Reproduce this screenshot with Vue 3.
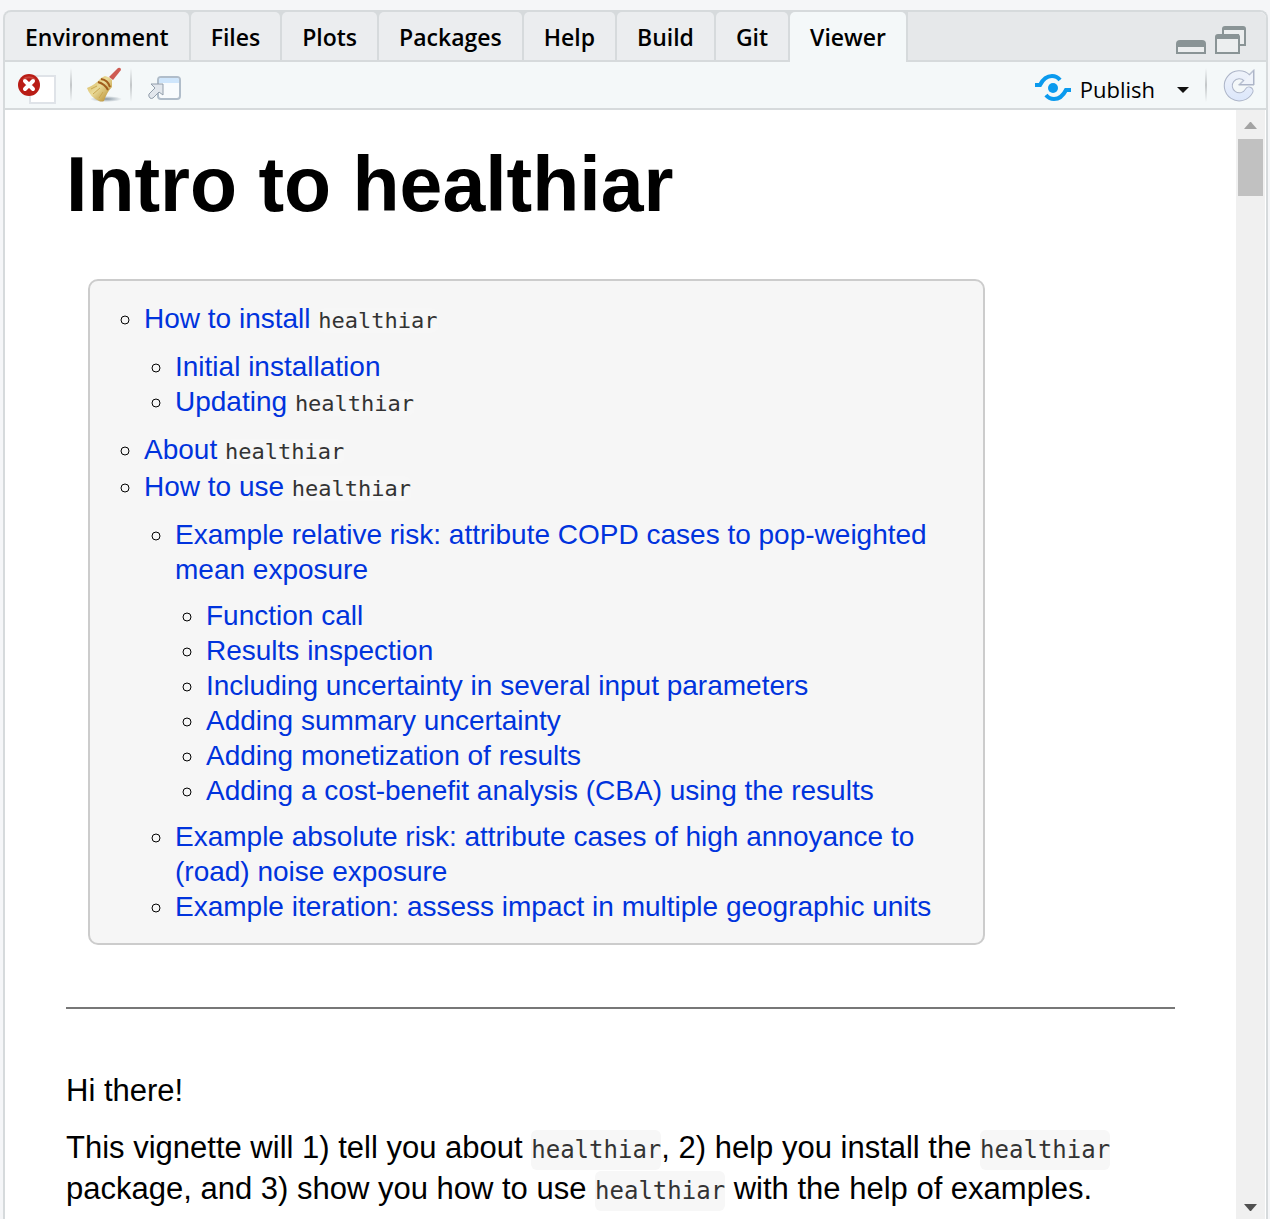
<script setup>
import { ref } from 'vue'

const tabs = ['Environment', 'Files', 'Plots', 'Packages', 'Help', 'Build', 'Git', 'Viewer']
const active = ref('Viewer')
</script>

<template>
  <div class="page">
    <section class="pane">
      <header class="tabbar">
        <div class="tabs" role="tablist">
          <button
            v-for="tab in tabs"
            :key="tab"
            type="button"
            role="tab"
            class="tab"
            :class="{ active: tab === active }"
            :aria-selected="tab === active"
            @click="active = tab"
          >{{ tab }}</button>
        </div>
        <div class="window-controls">
          <button type="button" class="icon-button" aria-label="Minimize">
            <svg width="30" height="28" viewBox="0 0 30 28">
              <path d="M0 28V18q0-4 4-4h22q4 0 4 4v10z" fill="#8a9496" />
              <rect x="2" y="21" width="26" height="5" fill="#eceeef" />
            </svg>
          </button>
          <button type="button" class="icon-button" aria-label="Maximize">
            <svg width="31" height="28" viewBox="0 0 31 28">
              <path d="M7 8V3q0-3 3-3h18q3 0 3 3v17h-7" fill="#8a9496" />
              <path d="M9 4h20v14h-5V8H9z" fill="#eceeef" />
              <path d="M0 28V11q0-3 3-3h19q3 0 3 3v17z" fill="#8a9496" />
              <rect x="2" y="13" width="21" height="13" fill="#eceeef" />
            </svg>
          </button>
        </div>
      </header>

      <div class="toolbar" role="toolbar">
        <button type="button" class="icon-button remove" aria-label="Remove current viewer item">
          <svg width="38" height="32" viewBox="0 0 38 32">
            <rect x="12" y="4" width="25" height="27" fill="#fff" stroke="#dfe3e8" stroke-width="2" />
            <circle cx="11" cy="13" r="11" fill="#b91d16" />
            <path d="M5 8a8 8 0 0 1 12 0" fill="none" stroke="#c9443c" stroke-width="2" />
            <path d="M7 9l8 8M15 9l-8 8" stroke="#fff" stroke-width="4" stroke-linecap="round" />
          </svg>
        </button>
        <span class="separator"></span>
        <button type="button" class="icon-button" aria-label="Clear all viewer items">
          <svg width="36" height="36" viewBox="0 0 36 36">
            <defs>
              <linearGradient id="straw" x1="0" y1="0" x2="1" y2="1">
                <stop offset="0" stop-color="#d3b04e" />
                <stop offset=".45" stop-color="#eadb9a" />
                <stop offset="1" stop-color="#b18321" />
              </linearGradient>
              <radialGradient id="shade">
                <stop offset="0" stop-color="#8795a1" />
                <stop offset="1" stop-color="#8795a1" stop-opacity="0" />
              </radialGradient>
            </defs>
            <ellipse cx="20" cy="32" rx="16" ry="3" fill="url(#shade)" />
            <path d="M23 10L32 1q3-1 3 2L27 13z" fill="#ce5b52" />
            <path d="M1 21q8-3 14-10l4-2q5 1 7 4v7q-5 5-8 14-3 1-5 0Q4 30 1 21z" fill="url(#straw)" />
            <path d="M15 12q7 1 9 8M12 15q7 2 10 8" fill="none" stroke="#a15d1d" stroke-width="2" />
            <path d="M5 22l6-3M7 27l7-6M13 31l4-6" stroke="#c9a650" stroke-width="1" />
          </svg>
        </button>
        <span class="separator narrow"></span>
        <button type="button" class="icon-button popout" aria-label="Show in new window">
          <svg width="34" height="26" viewBox="0 0 34 26">
            <rect x="10" y="2" width="22" height="22" rx="3" fill="#f8fbfd" stroke="#b0bdca" stroke-width="2" />
            <path d="M11 8V5q0-2 2-2h16q2 0 2 2v3z" fill="#cfe6fc" />
            <path d="M3 9h12v11l-4-3-6 6q-2 1-3 0-2-2-1-4l6-6z" fill="#e2e7ed" stroke="#929eab" stroke-width="1" />
          </svg>
        </button>

        <button type="button" class="publish">
          <svg width="36" height="28" viewBox="0 0 36 28" aria-hidden="true">
            <circle cx="18" cy="14" r="5" fill="#0a9aee" />
            <path d="M0 11h5C8 5 12 2 17 2q5 0 8 4M36 16h-5C28 22 24 25 19 25q-5 0-8-4" fill="none" stroke="#0a9aee" stroke-width="4" />
          </svg>
          <span>Publish</span>
        </button>
        <button type="button" class="icon-button options" aria-label="Publish options">
          <svg width="12" height="6" viewBox="0 0 12 6"><path d="M0 0h12L6 6z" fill="#111" /></svg>
        </button>
        <span class="separator last"></span>
        <button type="button" class="icon-button" aria-label="Refresh viewer">
          <svg width="32" height="34" viewBox="0 0 32 34">
            <defs>
              <linearGradient id="fresh" gradientUnits="userSpaceOnUse" x1="0" y1="0" x2="0" y2="34">
                <stop offset="0" stop-color="#f1f4fa" />
                <stop offset="1" stop-color="#dbe6fb" />
              </linearGradient>
            </defs>
            <g fill="none" stroke-linecap="round">
              <path d="M24 10A11 11 0 1 0 26 23" stroke="#adb5c8" stroke-width="9" />
              <path d="M31 2v15H16z" fill="#adb5c8" stroke="#adb5c8" stroke-width="1" />
              <path d="M24 10A11 11 0 1 0 26 23" stroke="url(#fresh)" stroke-width="7" />
              <path d="M30 4v12H18z" fill="#eff3fa" />
            </g>
          </svg>
        </button>
      </div>

      <div class="viewer">
        <main class="document">
          <h1>Intro to healthiar</h1>

          <nav class="toc">
            <ul>
              <li>
                <div class="coded"><a href="#install">How to install <code>healthiar</code></a></div>
                <ul>
                  <li><a href="#initial">Initial installation</a></li>
                  <li class="coded"><a href="#updating">Updating <code>healthiar</code></a></li>
                </ul>
              </li>
              <li class="coded"><a href="#about">About <code>healthiar</code></a></li>
              <li>
                <div class="coded"><a href="#use">How to use <code>healthiar</code></a></div>
                <ul>
                  <li>
                    <a href="#relative-risk">Example relative risk: attribute COPD cases to pop-weighted mean exposure</a>
                    <ul>
                      <li><a href="#call">Function call</a></li>
                      <li><a href="#results">Results inspection</a></li>
                      <li><a href="#uncertainty">Including uncertainty in several input parameters</a></li>
                      <li><a href="#summary">Adding summary uncertainty</a></li>
                      <li><a href="#monetization">Adding monetization of results</a></li>
                      <li><a href="#cba">Adding a cost-benefit analysis (CBA) using the results</a></li>
                    </ul>
                  </li>
                  <li><a href="#absolute-risk">Example absolute risk: attribute cases of high annoyance to (road) noise exposure</a></li>
                  <li><a href="#iteration">Example iteration: assess impact in multiple geographic units</a></li>
                </ul>
              </li>
            </ul>
          </nav>

          <hr />

          <p>Hi there!</p>
          <p>This vignette will 1) tell you about <code>healthiar</code>, 2) help you install the <code>healthiar</code> package, and 3) show you how to use <code>healthiar</code> with the help of examples.</p>
        </main>

        <div class="scrollbar" aria-hidden="true">
          <svg width="13" height="7" viewBox="0 0 13 7"><path d="M0 7h13L7 0H6z" fill="#a3a3a3" /></svg>
          <div class="thumb"></div>
          <svg class="down" width="13" height="7" viewBox="0 0 13 7"><path d="M0 0h13L7 7H6z" fill="#505050" /></svg>
        </div>
      </div>
    </section>
  </div>
</template>

<style>
body {
  margin: 0;
  background: #f5f6f8;
}
</style>

<style scoped>
.page {
  box-sizing: border-box;
  display: flex;
  min-height: 100vh;
  padding: 10px 2px 0 3px;
  font-family: "Open Sans", "Noto Sans", sans-serif;
  color: #000;
}
.pane {
  flex: 1;
  min-width: 0;
  display: flex;
  flex-direction: column;
  border: 2px solid #d6dadc;
  border-width: 2px 2px 0;
  border-radius: 8px 8px 0 0;
  background: #fff;
  overflow: hidden;
}
button {
  margin: 0;
  padding: 0;
  border: 0;
  background: none;
  color: inherit;
  font: inherit;
}
svg {
  display: block;
}
.tabbar {
  display: flex;
  justify-content: space-between;
  height: 50px;
  background: #e6e8ea;
  box-shadow: inset 0 -2px #d6dadc;
}
.tabs {
  display: flex;
  align-items: flex-start;
  background: #d6dadc;
  gap: 2px;
  padding-right: 2px;
}
.tab {
  height: 48px;
  padding: 2px 20px 0;
  border-radius: 5px 5px 0 0;
  background: #ebedef;
  font-size: 23px;
  font-weight: 600;
}
.tab.active {
  height: 50px;
  padding-bottom: 2px;
  background: #f4f8f9;
}
.window-controls {
  display: flex;
  align-items: center;
  gap: 9px;
  padding: 6px 20px 0 0;
  box-sizing: border-box;
}
.toolbar {
  display: flex;
  align-items: center;
  height: 46px;
  padding: 0 11px 0 13px;
  border-bottom: 2px solid #d6dadc;
  background: #f4f8f9;
}
.separator {
  width: 2px;
  height: 34px;
  margin: 0 14px;
  background: linear-gradient(#f4f8f9, #c3c7c9 50%, #f4f8f9);
}
.separator.narrow {
  margin: 0 16px 0 8px;
}
.separator.last {
  margin: 0 16px;
}
.popout {
  padding-top: 6px;
}
.remove {
  padding-top: 5px;
}
.publish {
  display: flex;
  align-items: center;
  gap: 9px;
  margin: 8px 22px 0 auto;
  font-size: 22px;
  line-height: 34px;
}
.publish svg {
  margin-bottom: 2px;
}
.options {
  padding-top: 10px;
}
.viewer {
  flex: 1;
  display: flex;
}
.document {
  flex: 1;
  min-width: 0;
  padding: 30px 61px 10px;
  font-family: "Liberation Sans", Arial, sans-serif;
  font-size: 31px;
  line-height: 41px;
}
h1 {
  margin: 0 0 51px;
  font-size: 77px;
  line-height: 88px;
}
.toc {
  box-sizing: border-box;
  max-width: 897px;
  margin-left: 22px;
  padding: 20px 28px 8px 23px;
  border: 2px solid #ccc;
  border-radius: 10px;
  background: #f6f6f6;
  font-size: 28px;
  line-height: 35px;
}
.toc ul {
  margin: 0;
  padding-left: 31px;
  list-style: circle;
}
.toc ul ul {
  margin: 11px 0;
}
.coded {
  padding-bottom: 2px;
}
a {
  color: #0033dd;
  text-decoration: none;
}
code {
  border-radius: 6px;
  background: #f7f7f7;
  color: #333;
  font-family: "DejaVu Sans Mono", "Liberation Mono", monospace;
  font-size: 24px;
  line-height: 1;
}
p code {
  padding: 6px 0;
}
.toc code {
  font-size: 22px;
}
hr {
  margin: 62px 0 61px;
  border: 0;
  border-top: 2px solid #777;
}
p {
  margin: 0;
}
p + p {
  margin-top: 16px;
}
.scrollbar {
  display: flex;
  flex-direction: column;
  align-items: center;
  width: 29px;
  padding: 12px 0 8px;
  box-sizing: border-box;
  margin-right: 1px;
  background: #f0f0f0;
}
.thumb {
  width: 25px;
  height: 57px;
  margin-top: 10px;
  background: #c1c1c1;
}
.down {
  margin-top: auto;
}
</style>
